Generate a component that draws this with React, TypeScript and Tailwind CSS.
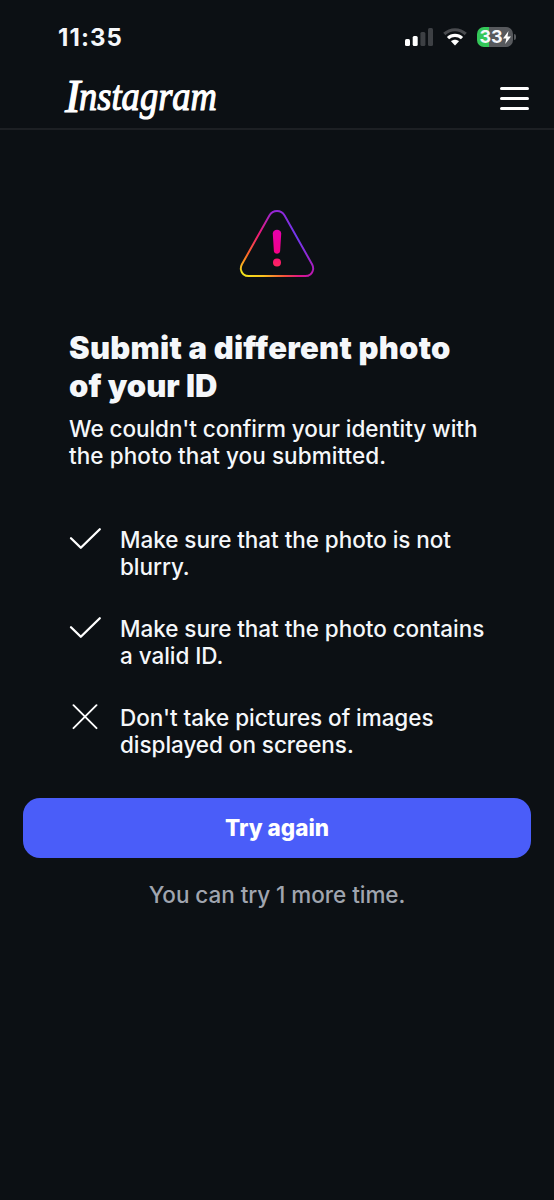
import React from 'react';

interface TipProps {
  kind: 'check' | 'cross';
  lines: string[];
}

const TIPS: TipProps[] = [
  { kind: 'check', lines: ['Make sure that the photo is not', 'blurry.'] },
  { kind: 'check', lines: ['Make sure that the photo contains', 'a valid ID.'] },
  { kind: 'cross', lines: ["Don't take pictures of images", 'displayed on screens.'] },
];

const StatusBar: React.FC = () => (
  <div className="flex h-[74px] items-center justify-between pl-[58px] pr-[37px]">
    <span className="pt-[2px] text-[24px] font-bold leading-none tracking-[1.1px]">11:35</span>
    <div className="flex items-center">
      {/* Cellular signal */}
      <svg className="h-[18px] w-7" viewBox="0 0 28 18">
        <rect x="0" y="11" width="5" height="7" rx="1.5" fill="#fff" />
        <rect x="7.7" y="8" width="5" height="10" rx="1.5" fill="#fff" />
        <rect x="15.4" y="4" width="5" height="14" rx="1.5" fill="#3d4044" />
        <rect x="23" y="0" width="5" height="18" rx="1.5" fill="#3d4044" />
      </svg>
      {/* Wi-Fi */}
      <svg className="ml-[10px] h-[18px] w-6" viewBox="0 0 24 18" fill="none" strokeWidth="3.2">
        <path d="M1.3 6C7.3 .3 16.7 .3 22.7 6" stroke="#494b4f" />
        <path d="M5 10.2c4-3.8 10-3.8 14 0" stroke="#fff" />
        <path d="M8 13.2c2.4-2 5.600-2 8 0L12 17.500z" fill="#fff" />
      </svg>
      {/* Battery */}
      <div className="ml-[10px] flex h-5 w-[36px] items-center justify-center overflow-hidden rounded-[7px] bg-[linear-gradient(90deg,#34c759_33%,#57595d_33%)]">
        <span className="text-[18px] font-bold leading-none">33</span>
        <svg className="h-[13px] w-2" viewBox="0 0 8 13" fill="#fff">
          <path d="M5.500 0 0 7.400h3.300L2.200 13 8 5.400H4.500z" />
        </svg>
      </div>
      <div className="ml-px mr-px h-[6px] w-[2px] rounded-r-full bg-[#57595d]" />
    </div>
  </div>
);

const Header: React.FC = () => (
  <header className="flex h-14 items-center justify-between border-b-2 border-[#1d2024] pl-[60px] pr-[25px]">
    <svg
      className="h-[54px] w-[170px] overflow-visible"
      viewBox="0 0 170 54"
      fill="#fff"
      stroke="#fff"
      strokeWidth="1.2"
      strokeLinejoin="round"
    >
      <text className="font-['Liberation_Serif',serif] text-[42px] italic">
        <tspan x="5" y="38" className="text-[46px]">
          I
        </tspan>
        <tspan x="19" y="36" textLength="138" lengthAdjust="spacingAndGlyphs">
          nstagram
        </tspan>
      </text>
    </svg>
    <button aria-label="Menu" className="mb-[6px] flex flex-col gap-[7px]">
      <span className="h-[3px] w-[29px] rounded-full bg-white" />
      <span className="h-[3px] w-[29px] rounded-full bg-white" />
      <span className="h-[3px] w-[29px] rounded-full bg-white" />
    </button>
  </header>
);

const WarningIcon: React.FC = () => (
  <svg className="h-[70px] w-[76px]" viewBox="0 0 78 70" preserveAspectRatio="none" fill="none">
    <defs>
      <linearGradient id="side-left" x1="36" y1="2" x2="3" y2="66" gradientUnits="userSpaceOnUse">
        <stop stopColor="#9127d8" />
        <stop offset="0.38" stopColor="#ee1877" />
        <stop offset="0.72" stopColor="#ff6b24" />
        <stop offset="1" stopColor="#f5e51b" />
      </linearGradient>
      <linearGradient id="side-right" x1="39" y1="2" x2="76" y2="68" gradientUnits="userSpaceOnUse">
        <stop stopColor="#9127d8" />
        <stop offset="0.45" stopColor="#7038ef" />
        <stop offset="1" stopColor="#b619b6" />
      </linearGradient>
      <linearGradient id="base" x1="3" y1="68" x2="76" y2="68" gradientUnits="userSpaceOnUse">
        <stop stopColor="#f0e41c" />
        <stop offset="0.3" stopColor="#fbc21e" />
        <stop offset="0.6" stopColor="#f5503c" />
        <stop offset="0.8" stopColor="#e11685" />
        <stop offset="1" stopColor="#b619b6" />
      </linearGradient>
      <linearGradient id="mark" x1="39" y1="21" x2="39" y2="57" gradientUnits="userSpaceOnUse">
        <stop stopColor="#e600ae" />
        <stop offset="0.6" stopColor="#f5008b" />
        <stop offset="1" stopColor="#ff265e" />
      </linearGradient>
    </defs>
    <path d="M39 2C35.800 2 33 3.500 31.200 6.500L2.900 55.500C1.800 57.600 1.600 59.500 2.100 61.500" stroke="url(#side-left)" strokeWidth="2" />
    <path d="M39 2c3.200 0 6 1.500 7.800 4.500l28.300 49c1.100 2.100 1.300 4 .8 6" stroke="url(#side-right)" strokeWidth="2" />
    <path d="M2.100 61.300C3 65 6 67.100 10 67.100h58c4 0 7-2.100 7.900-5.800" stroke="url(#base)" strokeWidth="2" />
    <path d="M34.700 24.500c0-5 8.600-5 8.600 0l-1.100 17.500c-.3 3.500-6.100 3.500-6.400 0z" fill="url(#mark)" />
    <circle cx="39" cy="53.500" r="4.100" fill="url(#mark)" />
  </svg>
);

const Tip: React.FC<TipProps> = ({ kind, lines }) => (
  <li className="flex">
    <svg className="h-8 w-[51px] shrink-0" viewBox="0 0 51 32" fill="none" stroke="#fff" strokeLinecap="round">
      {kind === 'check' ? (
        <path d="M2 12.200 11.800 21.800 30.800 3.200" strokeWidth="2.300" strokeLinejoin="round" />
      ) : (
        <path d="m4.500 1.200 23 23M27.500 1.200 4.500 24.200" strokeWidth="1.900" />
      )}
    </svg>
    <p>
      {lines.map((line) => (
        <span key={line} className="block whitespace-nowrap">
          {line}
        </span>
      ))}
    </p>
  </li>
);

const App: React.FC = () => (
  <div className="min-h-[1200px] w-full bg-[#0c1014] font-[Inter,sans-serif] text-[#f5f7fa]">
    <StatusBar />
    <Header />
    <main className="flex flex-col px-[23px]">
      <div className="mt-[79px] flex justify-center">
        <WarningIcon />
      </div>
      <section className="mt-[50px] px-[46px] text-[22.5px] font-medium leading-[27px] tracking-[-0.05px]">
        <h1 className="whitespace-nowrap text-[31px] font-black leading-[38px] tracking-normal">
          <span className="block tracking-[0.25px]">Submit a different photo</span>
          <span className="block">of your ID</span>
        </h1>
        <p className="mt-[10px] whitespace-nowrap">
          <span className="block">We couldn't confirm your identity with</span>
          <span className="block tracking-[0.06px]">the photo that you submitted.</span>
        </p>
        <ul className="mt-[57px] flex flex-col gap-[35px]">
          {TIPS.map((tip) => (
            <Tip key={tip.lines[0]} kind={tip.kind} lines={tip.lines} />
          ))}
        </ul>
      </section>
      <button className="mt-[40px] h-[60px] rounded-[17px] bg-[#4a5df9] text-[22.5px] font-extrabold text-white">
        Try again
      </button>
      <p className="mt-[23px] text-center text-[22.5px] font-medium leading-7 tracking-[-0.05px] text-[#a0a5af]">
        You can try 1 more time.
      </p>
    </main>
  </div>
);

export default App;
